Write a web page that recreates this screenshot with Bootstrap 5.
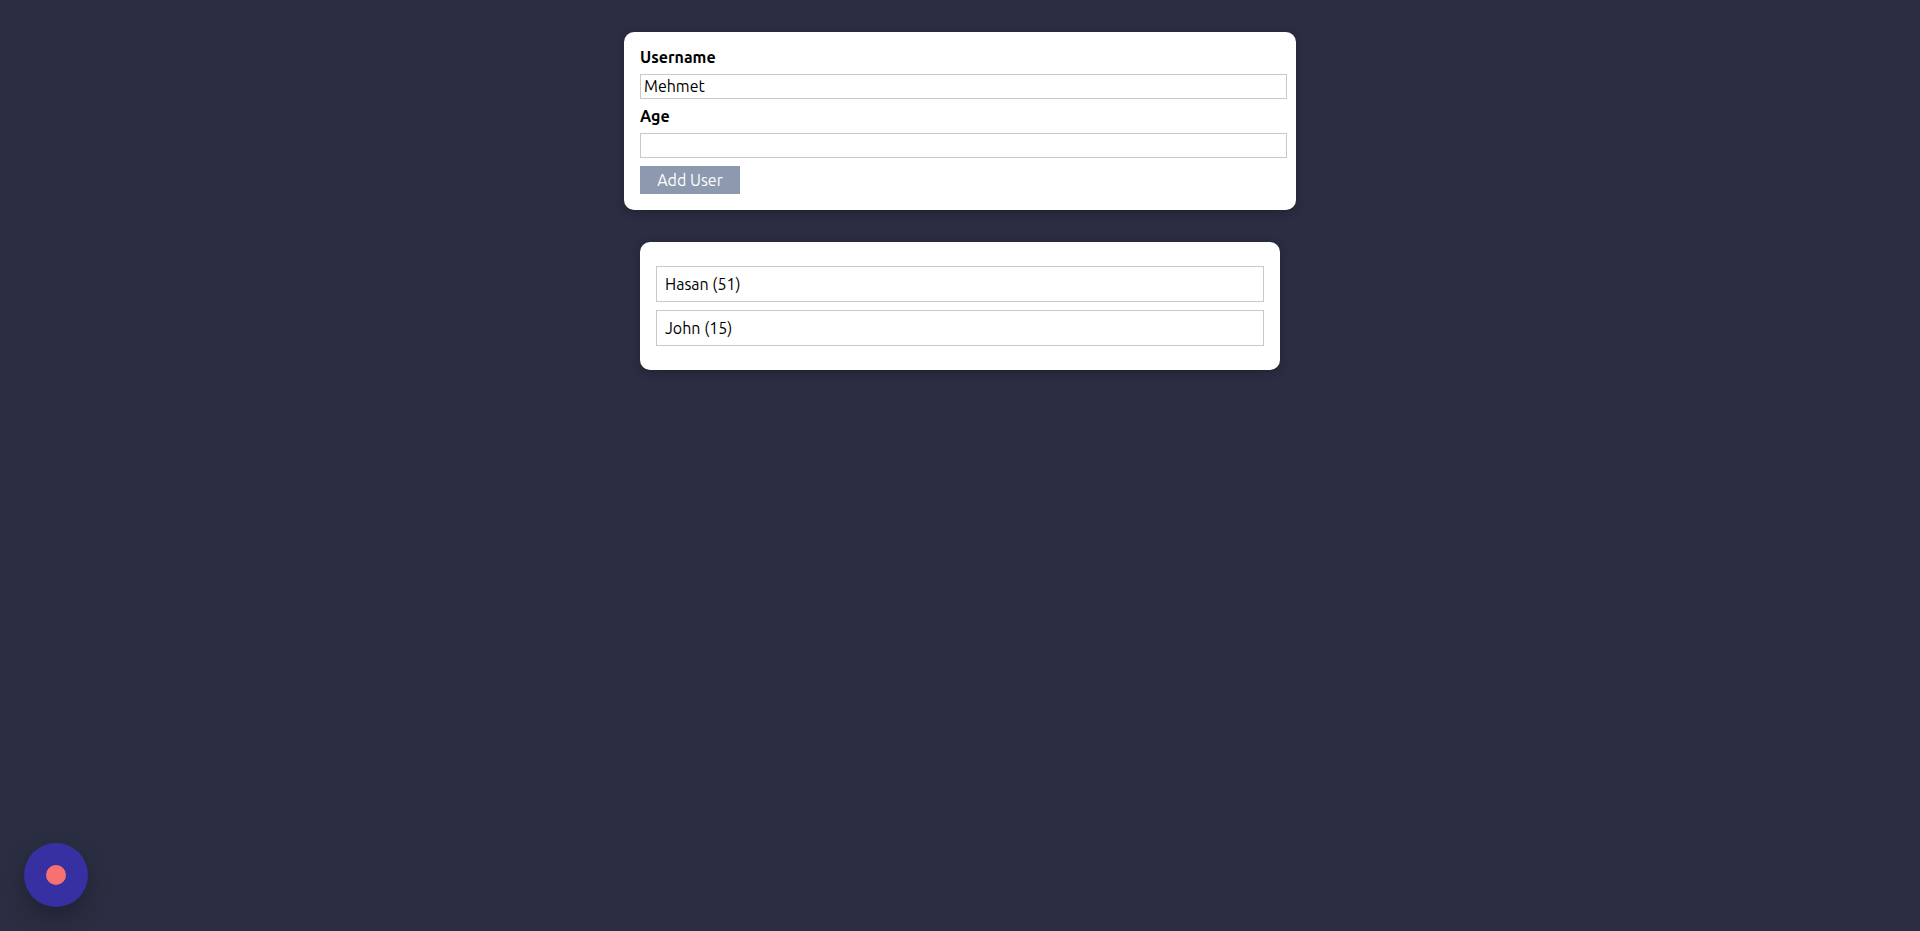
<!DOCTYPE html>
<html lang="en">
<head>
<meta charset="utf-8">
<meta name="viewport" content="width=device-width, initial-scale=1">
<title>Users</title>
<link href="https://cdn.jsdelivr.net/npm/bootstrap@5.3.0/dist/css/bootstrap.min.css" rel="stylesheet">
<style>
  body { background: #2b2d42; color: #000; font-family: Ubuntu, "Noto Sans", sans-serif; font-size: 16px; line-height: 18px; }
  .page { padding-top: 32px; padding-bottom: 32px; }
  .panel { border: 0; border-radius: 10px; color: #000; box-shadow: 0 2px 8px rgba(0, 0, 0, .26); }
  .form-panel { max-width: 672px; margin-bottom: 32px; padding: 16px 9px 16px 16px; }
  .list-panel { max-width: 640px; padding: 24px 16px; }
  .user-field { height: 25px; min-height: 0; padding: 0 3px 2px; border: 1px solid #c8c8c8; border-radius: 0; color: #000; font-size: 16px; line-height: 21px; }
  .add-btn { width: 100px; height: 28px; padding: 0; border: 0; border-radius: 0; background: #8d99ae; color: #fff; font-size: 16px; line-height: 28px; }
  .user-item { height: 36px; padding: 8px; border: 1px solid #c8c8c8; }
  .record-btn { width: 64px; height: 64px; border: 0; background: #3730a3; box-shadow: 0 10px 24px rgba(0, 0, 0, .25); }
  .record-dot { width: 20px; height: 20px; background: #f87171; }
</style>
</head>
<body>
<main class="container-fluid page">
  <form class="card panel form-panel mx-auto">
    <label for="username" class="fw-bold mb-2">Username</label>
    <input id="username" type="text" class="form-control user-field mb-2" value="Mehmet">
    <label for="age" class="fw-bold mb-2">Age</label>
    <input id="age" type="number" class="form-control user-field mb-2">
    <button type="button" class="btn add-btn">Add User</button>
  </form>
  <section class="card panel list-panel mx-auto">
    <ul class="list-unstyled d-flex flex-column gap-2 mb-0">
      <li class="user-item">Hasan (51)</li>
      <li class="user-item">John (15)</li>
    </ul>
  </section>
</main>
<button type="button" class="record-btn position-fixed bottom-0 start-0 m-4 rounded-circle d-flex align-items-center justify-content-center" aria-label="Record">
  <span class="record-dot rounded-circle"></span>
</button>
<script src="https://cdn.jsdelivr.net/npm/bootstrap@5.3.0/dist/js/bootstrap.bundle.min.js"></script>
</body>
</html>
